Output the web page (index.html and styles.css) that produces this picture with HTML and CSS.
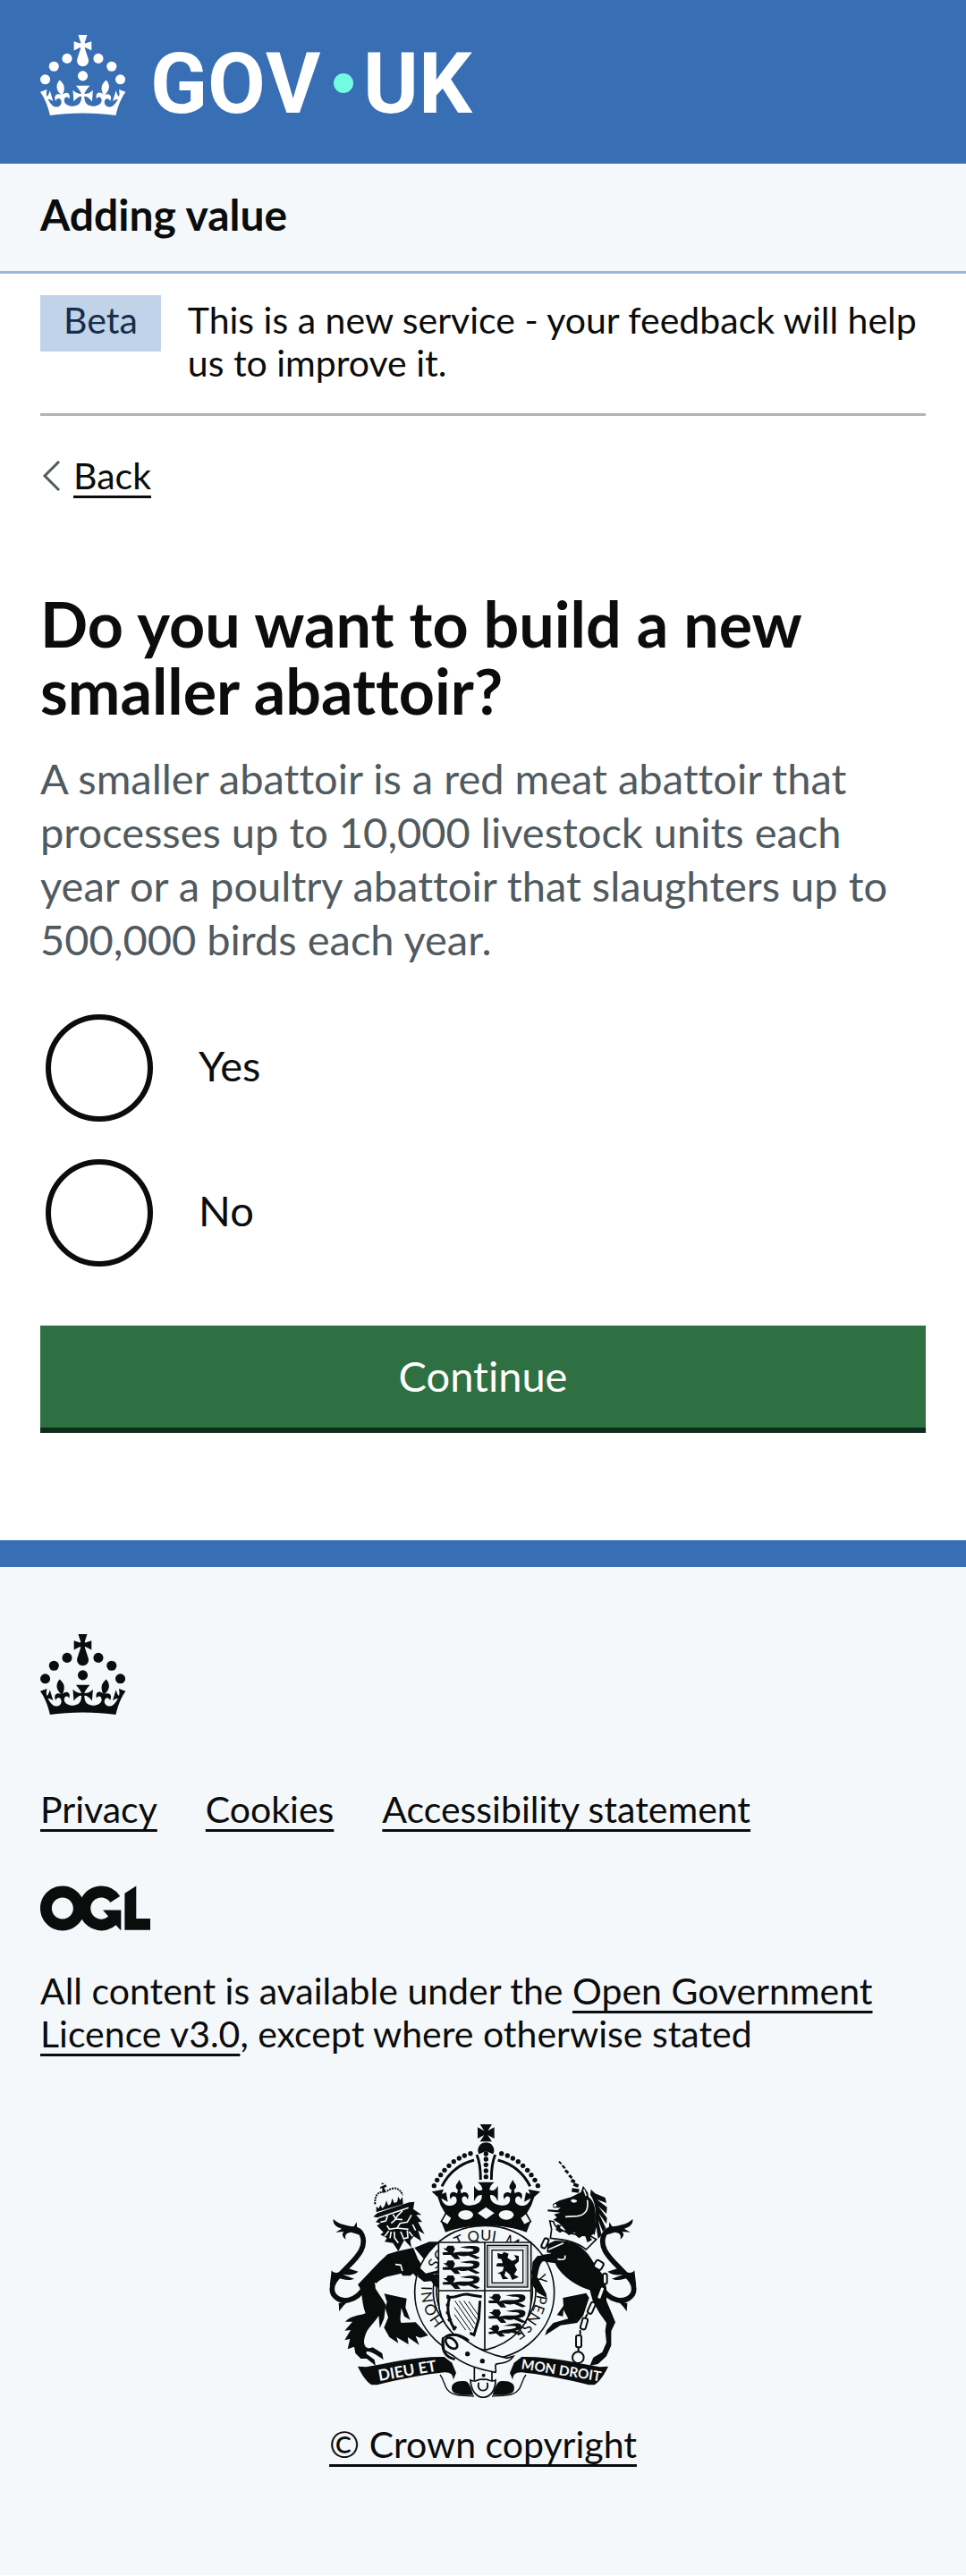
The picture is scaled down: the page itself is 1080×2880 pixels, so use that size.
FILE: index.html
```html
<!DOCTYPE html>
<html lang="en">
<head>
<meta charset="utf-8">
<meta name="viewport" content="width=device-width, initial-scale=1">
<title>Do you want to build a new smaller abattoir? - Adding value - GOV.UK</title>
<link rel="stylesheet" href="styles.css">
</head>
<body>
<svg class="defs" aria-hidden="true">
  <symbol id="crown" viewBox="0 0 64 60">
    <circle cx="20" cy="17.6" r="3.7"/><circle cx="10.2" cy="23.5" r="3.7"/><circle cx="3.7" cy="33.2" r="3.7"/>
    <circle cx="31.7" cy="30.6" r="3.7"/><circle cx="43.3" cy="17.6" r="3.7"/><circle cx="53.2" cy="23.5" r="3.7"/><circle cx="59.7" cy="33.2" r="3.7"/>
    <path d="M33.1,9.8c.2-.1.3-.3.5-.5l4.6,2.4v-6.8l-4.6,1.5c-.1-.2-.3-.3-.5-.5l1.9-5.9h-6.7l1.9,5.9c-.2.1-.3.3-.5.5l-4.6-1.5v6.8l4.6-2.4c.1.2.3.3.5.5l-2.6,8c-.9,2.8,1.2,5.7,4.1,5.7h0c3,0,5.1-2.9,4.1-5.7l-2.6-8ZM37,37.9s-3.4,3.8-4.1,6.1c2.2,0,4.2-.5,6.4-2.8l-.7,8.5c-2-2.8-4.4-4.1-5.7-3.8.1,3.1.5,6.7,5.8,7.2,3.7.3,6.7-1.5,7-3.8.4-2.6-2-4.3-3.7-1.6-1.4-4.5,2.4-6.1,4.9-3.2-1.9-4.5-1.8-7.7,2.4-10.9,3,4,2.6,7.3-1.2,11.1,2.4-1.3,6.2,0,4,4.6-1.2-2.8-3.7-2.2-4.2.2-.3,1.7.7,3.7,3,4.2,1.9.3,4.7-.9,7-5.9-1.3,0-2.4.7-3.9,1.7l2.4-8c.6,2.3,1.4,3.7,2.2,4.5.6-1.6.5-2.8,0-5.3l5,1.8c-2.6,3.6-5.2,8.7-7.3,17.5-7.4-1.1-15.7-1.7-24.5-1.7h0c-8.8,0-17.1.6-24.5,1.7-2.1-8.9-4.7-13.9-7.3-17.5l5-1.8c-.5,2.5-.6,3.7,0,5.3.8-.8,1.6-2.3,2.2-4.5l2.4,8c-1.5-1-2.6-1.7-3.9-1.7,2.3,5,5.2,6.2,7,5.9,2.3-.4,3.3-2.4,3-4.2-.5-2.4-3-3.1-4.2-.2-2.2-4.6,1.6-6,4-4.6-3.7-3.7-4.2-7.1-1.2-11.1,4.2,3.2,4.3,6.4,2.4,10.9,2.5-2.8,6.3-1.3,4.9,3.2-1.8-2.7-4.1-1-3.7,1.6.3,2.3,3.3,4.1,7,3.8,5.4-.5,5.7-4.2,5.8-7.2-1.3-.2-3.7,1-5.7,3.8l-.7-8.5c2.2,2.3,4.2,2.7,6.4,2.8-.7-2.3-4.1-6.1-4.1-6.1h10.6,0Z"/>
  </symbol>
</svg>

<header class="header">
  <a class="header-link" href="#" aria-label="GOV.UK">
    <svg class="logotype" viewBox="0 0 496 114" fill="currentColor">
      <use href="#crown" width="96" height="90"/>
      <text class="wordmark" x="123" y="87">GOV</text>
      <circle class="dot" cx="339" cy="54" r="11"/>
      <text class="wordmark" x="361" y="87">UK</text>
    </svg>
  </a>
</header>

<section class="service" aria-label="Service information">
  <a class="service-name" href="#">Adding value</a>
</section>

<div class="container">
  <div class="phase">
    <strong class="tag">Beta</strong>
    <span class="phase-text">This is a new service - your feedback will help us to improve it.</span>
  </div>
  <a class="back" href="#">
    <svg class="chevron" viewBox="0 0 30 40" aria-hidden="true"><path d="M21 4 5 20 21 36"/></svg>
    <span class="link">Back</span>
  </a>
  <main class="main">
    <form class="form">
      <fieldset class="fieldset" aria-describedby="hint">
        <legend class="legend"><h1 class="heading">Do you want to build a new smaller abattoir?</h1></legend>
        <p class="hint" id="hint">A smaller abattoir is a red meat abattoir that processes up to 10,000 livestock units each year or a poultry abattoir that slaughters up to 500,000 birds each year.</p>
        <div class="radios">
          <div class="radio"><input class="radio-input" type="radio" name="build" id="build-yes" value="yes"><label class="radio-label" for="build-yes">Yes</label></div>
          <div class="radio"><input class="radio-input" type="radio" name="build" id="build-no" value="no"><label class="radio-label" for="build-no">No</label></div>
        </div>
      </fieldset>
      <button class="button" type="submit">Continue</button>
    </form>
  </main>
</div>

<footer class="footer">
  <svg class="footer-crown" viewBox="0 0 64 60" fill="currentColor" aria-hidden="true"><use href="#crown" width="64" height="60"/></svg>
  <nav class="footer-links" aria-label="Support links">
    <a class="link" href="#">Privacy</a>
    <a class="link" href="#">Cookies</a>
    <a class="link" href="#">Accessibility statement</a>
  </nav>
  <svg class="ogl" viewBox="0 0 483.2 195.7" fill="currentColor" role="img" aria-label="Open Government Licence"><path d="M421.5 142.8V.1l-50.7 32.3v161.1h112.4v-50.7zm-122.3-9.6A47.12 47.12 0 0 1 221 97.8c0-26 21.1-47.1 47.1-47.1 16.7 0 31.4 8.7 39.7 21.8l42.7-27.2A97.63 97.63 0 0 0 268.1 0c-36.5 0-68.3 20.1-85.1 49.7A98 98 0 0 0 97.8 0C43.9 0 0 43.9 0 97.8s43.9 97.8 97.8 97.8c36.5 0 68.3-20.1 85.1-49.7a97.76 97.76 0 0 0 149.6 25.4l19.4 22.2h3v-87.8h-80l24.3 27.5zM97.8 145c-26 0-47.1-21.1-47.1-47.1s21.1-47.1 47.1-47.1 47.1 21.1 47.1 47.1S123.8 145 97.8 145"/></svg>
  <p class="licence">All content is available under the <a class="link" href="#">Open Government Licence v3.0</a>, except where otherwise stated</p>
  <a class="copyright" href="#">
    <svg class="crest" viewBox="54 48 1032 918" fill="currentColor" aria-hidden="true">
      <defs>
        <path id="garter" d="M575 770A176 166 0 0 1 575 438A176 166 0 0 1 575 770"/>
        <g id="passant"><path d="M4 12 14 12 20 3 38 3 44 14 38 28C58 20 80 26 100 22 112 18 108 12 84 12L60 8 84 5C110 2 130 4 126 18 124 28 112 32 102 31L128 44 116 48 88 36C76 40 62 38 52 34L62 48 44 48 30 34 4 34 2 26 22 24Z"/></g>
        <g id="crown-half">
          <path d="M398 274 438 266 432 282 446 276 452 308 430 296C436 316 450 324 466 320 482 316 486 302 478 292 472 286 464 290 462 300 452 282 466 268 483 280L486 268C476 262 478 250 484 246L490 234 498 248C504 258 502 264 494 268L497 280C514 268 528 284 518 300 516 288 506 286 500 294 496 312 510 322 528 320 552 318 568 306 566 286 556 282 548 290 540 306V254C548 268 556 274 568 268 568 258 562 250 552 242H581V388C530 388 480 396 444 410L430 374 444 348 428 320 418 292Z"/>
          <path class="line" d="M540 168C495 180 455 210 432 256"/>
          <path class="line" d="M549 150C560 175 562 205 562 234"/>
          <circle cx="528" cy="146" r="8"/><circle cx="508" cy="153" r="8"/><circle cx="490" cy="162" r="8"/><circle cx="472" cy="173" r="8"/><circle cx="456" cy="187" r="8"/><circle cx="441" cy="202" r="8"/><circle cx="428" cy="218" r="8"/><circle cx="416" cy="235" r="8"/><circle cx="406" cy="254" r="8"/>
          <ellipse class="light" cx="512" cy="352" rx="25" ry="16"/>
          <path class="light edge" d="M446 346 466 362 452 386 430 374Z"/>
        </g>
        <g id="tail">
          <path class="tail" d="M174 592C146 644 92 652 68 618 52 584 84 558 116 526 156 486 180 456 164 418 154 396 130 396 112 404"/>
          <path d="M68 366C90 386 112 386 136 392L146 376 148 396 172 424 128 410C108 412 106 422 110 434 94 424 98 412 104 408L76 410 96 398C74 392 66 380 68 366ZM62 538C72 552 90 548 108 528L152 542C134 556 118 554 100 552L138 566C120 574 96 568 78 560L56 590ZM88 676 86 648 120 640C106 652 98 660 88 676Z"/>
        </g>
        <g id="ribbon">
          <path d="M150 860 178 862C260 848 340 826 440 828L466 848 480 882 470 905C470 884 456 876 424 882 350 890 280 906 215 922H196C176 908 164 888 150 860Z"/>
          <path class="thin" d="M426 888C444 910 438 940 470 952 490 960 512 958 540 960"/>
          <path d="M466 938C460 916 484 906 512 910 526 914 532 940 538 956H500C480 952 468 950 466 938Z"/>
        </g>
      </defs>

      <!-- tails and supporters -->
      <use href="#tail"/>
      <use href="#tail" transform="translate(1140) scale(-1 1)"/>
      <path d="M340 462 390 442 420 442 372 500Z"/>
      <path d="M282 474 250 484 222 510 150 586C168 606 160 640 176 682 156 690 124 690 108 710L132 710 106 740 126 738 106 772 124 768 116 802 138 794 142 816 160 834 180 834 210 858 206 838 180 818C172 804 196 806 236 838L232 816 200 796C180 806 164 790 174 760 180 732 206 714 220 690L224 732 238 700 244 652 210 600C204 582 220 572 244 560L296 548 300 556 326 556 336 548 352 568 366 556 376 576 400 576 408 592 438 602 436 588 414 574 440 580 438 566 412 562 442 554 430 544 396 548 420 536 372 530 352 500 336 462Z"/>
      <path d="M238 616 314 632 310 662 326 704 306 692 296 664C294 690 290 706 296 714L344 712 386 756 360 764 344 758 356 788 318 762 320 786 280 762 286 782 256 762 238 730 252 696 242 664 248 644Z"/>
      <path class="cut" d="M276 518 294 520 300 540M208 580 216 596 238 622 244 650"/>
      <path d="M202 358 216 346 322 310 340 308 336 332 364 352 346 352 366 376 352 376 374 416 352 404 364 440 338 424 326 438 330 462 306 436 286 474 268 446 240 442 248 430 226 418 236 410 214 388 226 380 210 376 222 362Z"/>
      <path class="cut" d="M218 362 320 328M250 354 244 372 226 376M268 350 278 366 300 368M300 338 282 356 278 366 262 380M330 352 316 376 292 380 282 396M248 388 256 400 282 396 320 400M254 406 240 424M262 408 258 430M334 384 344 404M322 408 334 424M294 408 304 432 318 428 316 404M272 408 274 430 286 446"/>
      <path d="M226 258 244 250 247 258 238 260 246 276 232 278 232 262 224 264ZM230 244 240 248 230 250Z"/>
      <path class="beads" d="M208 316C206 286 220 274 232 276M248 272C272 254 294 264 300 286"/>
      <path d="M212 342 212 324 220 330 226 318 232 330 240 322 246 304 252 320 260 316 266 296 272 312 282 308 286 290 292 302 300 292 302 316 214 342Z"/>
      <g class="horn"><path d="m825 173 8 8" stroke-width="6"/><path d="m836 186 9 10" stroke-width="7"/><path d="m846 202 10 9" stroke-width="9"/><path d="m859 219 9 9" stroke-width="9"/><path d="m866 235 12 7" stroke-width="11"/><path d="m874 249 16 6" stroke-width="11"/><path d="m868 268 24 4" stroke-width="13"/></g>
      <path d="M804 316 826 304 866 292 898 276 906 254 922 278 924 292C950 310 954 360 940 416L922 430 880 412 848 404 826 380 806 368 818 360 808 350 830 344 786 340 788 334 820 336 830 328 806 328Z"/>
      <path class="light" d="M864 304C872 296 882 300 886 306 878 314 868 312 864 304Z"/><circle class="light" cx="812" cy="320" r="5"/>
      <path class="cut" d="M920 302C924 330 918 352 886 356L846 358M908 266 916 288"/>
      <path d="M930 284 932 266 946 280 980 294 984 312 952 300 986 326 984 348 956 322 986 362 984 382 958 346 982 396 972 408 956 368 968 420 956 432 950 392 944 420 936 410C954 370 952 316 930 284Z"/>
      <path class="light edge" d="M794 372 806 374 812 388C850 420 890 416 932 424L950 434 916 468C880 440 840 434 796 430L800 400Z"/>
      <path d="M818 384 832 386 828 396 842 404 828 412 814 402ZM850 388 862 392 862 404 876 412 858 420 844 408ZM886 396 896 400 896 416 908 420 892 430 878 418ZM912 420 924 420 936 436 920 444Z"/>
      <path d="M786 450 812 438 850 440C890 444 922 476 940 510L974 556 984 598 984 640 1014 712 1000 742 1000 790 984 826 956 852 928 858 940 830 970 812 984 780 980 740 984 714 960 680 938 640 928 604C880 590 826 550 812 514L770 508C758 520 756 540 752 560L782 616 784 630 752 612 732 582 736 510C744 480 780 488 800 480L784 478Z"/>
      <path d="M838 630 916 614 926 630 906 690 886 714 830 722 778 756 784 738 806 714 856 700 840 670 838 692 818 688 840 656Z"/>
      <path class="cut" d="M790 468 840 446M820 500C846 506 848 496 844 488"/>

      <!-- garter -->
      <ellipse class="light ring" cx="575" cy="612" rx="234" ry="224"/>
      <ellipse class="ring" cx="575" cy="608" rx="172" ry="162"/>
      <ellipse class="ring" cx="575" cy="608" rx="161" ry="156"/>
      <text class="motto"><textPath href="#garter" startOffset="150">HONI</textPath></text>
      <text class="motto"><textPath href="#garter" startOffset="338">SO</textPath></text>
      <text class="motto"><textPath href="#garter" startOffset="442">T QUI</textPath></text>
      <text class="motto"><textPath href="#garter" startOffset="602">M</textPath></text>
      <text class="motto"><textPath href="#garter" startOffset="756">Y</textPath></text>
      <text class="motto"><textPath href="#garter" startOffset="820">PENSE</textPath></text>
      <path d="M352 560 348 520 378 548 396 544 424 536 426 546 400 552 436 552 442 562 414 566 440 576 438 602 408 592 396 574 372 576Z"/>
      <path d="M736 510 752 490 800 484 800 508 770 508C758 520 756 540 752 560L782 616 784 630 752 612 732 582Z"/>

      <!-- shield -->
      <path class="light shield" d="M421 444H731V640C731 716 672 782 576 806 480 782 421 716 421 640Z"/>
      <path class="shield" d="M576 444V806M421 606H731"/>
      <use href="#passant" transform="translate(432 452)"/><use href="#passant" transform="translate(432 502)"/><use href="#passant" transform="translate(432 552)"/>
      <use href="#passant" transform="translate(586 614)"/><use href="#passant" transform="translate(586 666)"/><use href="#passant" transform="translate(584 722) rotate(-6) scale(.9)"/>
      <rect class="grey" x="589" y="459" width="126" height="130"/><rect class="thin" x="584" y="454" width="136" height="140"/><rect class="thin" x="600" y="470" width="104" height="110"/>
      <path d="M618 480 634 484 640 476 656 482 652 496 668 506 682 500 674 486 690 490 690 508 676 520 684 536 674 552 690 560 668 570 660 552 646 540 642 556 656 566 636 568 628 550 618 548 636 540 640 526 614 524 618 514 636 514 632 500 620 498Z"/>
      <path class="line" d="M458 628C448 660 452 700 476 738M456 628C490 630 500 610 528 620L566 626M560 640 556 700 540 754 526 748M452 620V634M446 654H458M446 680H458M452 706 464 700M470 738 480 726"/>
      <path class="strings" d="M476 640 540 734M490 640 544 718M506 640 550 704M522 642 554 688M474 662 528 740M474 686 512 738"/>

      <!-- belt -->
      <path class="light" d="M541 862H600V910H541Z"/>
      <path class="edge" d="M541 862V906M600 870V906"/>
      <path class="light belt" d="M436 764C460 750 484 752 512 772 556 806 600 822 650 832L672 826C658 848 632 850 614 852 608 862 616 872 612 880 556 870 500 850 470 824L440 806Z"/>
      <path class="belt" d="M436 764C430 800 438 828 476 836M444 760C470 746 500 756 522 774"/>
      <ellipse class="belt" cx="464" cy="782" rx="23" ry="14" transform="rotate(42 464 782)"/>
      <circle cx="518" cy="818" r="8"/><circle cx="568" cy="842" r="8"/><circle cx="572" cy="890" r="6"/>

      <!-- chain -->
      <g class="chain"><rect x="770" y="430" width="16" height="34" rx="7" transform="rotate(25 778 447)"/><rect x="944" y="506" width="28" height="28" rx="8" transform="rotate(30 958 520)"/><rect x="972" y="548" width="14" height="36" rx="7"/><rect x="957" y="592" width="16" height="44" rx="7" transform="rotate(20 965 614)"/><rect x="926" y="644" width="16" height="40" rx="7" transform="rotate(24 934 664)"/><rect x="900" y="698" width="18" height="38" rx="7" transform="rotate(16 909 717)"/><rect x="882" y="756" width="18" height="40" rx="6"/><circle cx="889" cy="830" r="19"/><path d="M896 738V754M890 798V810M920 684 914 696M950 636 944 646"/></g>

      <!-- scroll -->
      <use href="#ribbon"/><use href="#ribbon" transform="translate(1140) scale(-1 1)"/>
      <text class="scroll-text" font-size="52" transform="translate(222 909) rotate(-10)">DIEU ET</text>
      <text class="scroll-text" font-size="46" transform="translate(697 868) rotate(9)">MON DROIT</text>
      <path class="light edge" d="M528 906C548 916 550 900 570 904 592 900 594 916 612 906 612 940 596 962 570 964 546 962 530 940 528 906Z"/>
      <path class="edge" d="M556 914C544 950 596 950 584 914"/>

      <!-- royal crown -->
      <use href="#crown-half"/><use href="#crown-half" transform="translate(1160) scale(-1 1)"/>
      <path d="M560 48H600L586 70 608 58V96L586 84 600 106H560L574 84 552 96V58L574 70Z"/>
      <path d="M556 148A27 27 0 1 1 604 148L594 144H566Z"/>
      <path class="light" d="M564 150C566 136 594 136 596 150L592 236H568Z"/>
      <circle cx="580" cy="147" r="8"/><circle cx="580" cy="165" r="8"/><circle cx="580" cy="184" r="8"/><circle cx="580" cy="204" r="8"/><circle cx="580" cy="224" r="8"/>
      <path class="light" d="M552 346 580 326 608 346 580 366Z"/>
    </svg>
    <span class="link">© Crown copyright</span>
  </a>
</footer>
</body>
</html>
```
FILE: styles.css
```css
:root {
  --ink: #0b0c0c;
  --blue: #386eb4;
  --pale: #f4f8fb;
  --gutter: 45px;
}

* { box-sizing: border-box; }

body {
  margin: 0;
  background: #fff;
  color: var(--ink);
  font: 41px/48px Lato, "Liberation Sans", sans-serif;
  font-variant-ligatures: none;
}

a { color: inherit; text-decoration: none; }
svg { display: block; }
.defs { display: none; }

.link {
  text-decoration: underline;
  text-decoration-thickness: 3px;
  text-underline-offset: 7px;
  text-decoration-skip-ink: none;
}

.header {
  padding: 39px var(--gutter) 30px;
  background: var(--blue);
  color: #fff;
}
.header-link { display: block; width: fit-content; }
.logotype { width: 496px; height: 114px; }
.wordmark { font: bold 94px Roboto, sans-serif; font-kerning: none; }
.dot { fill: #73fbe1; }

.service {
  padding: 27px var(--gutter) 33px;
  background: var(--pale);
  border-bottom: 3px solid #99b7d8;
}
.service-name { display: block; font-size: 48px; line-height: 60px; font-weight: bold; }

.container { padding: 0 var(--gutter); }

.phase {
  display: flex;
  align-items: flex-start;
  gap: 30px;
  padding: 24px 0 32px;
  border-bottom: 3px solid #b2b3b5;
}
.tag {
  padding: 4px 26px 11px;
  background: #c0d3e9;
  color: #162d4b;
  font-weight: normal;
}
.phase-text { padding-top: 4px; }

.back { display: flex; width: fit-content; align-items: center; gap: 7px; margin-top: 43px; }
.chevron { width: 30px; height: 40px; fill: none; stroke: #505a5f; stroke-width: 3; }

.main { padding: 104px 0 120px; }
.fieldset { margin: 0; padding: 0; border: 0; min-width: 0; }
.legend { padding: 0; }
.heading { margin: 0; font-size: 70px; line-height: 75px; }
.hint { margin: 30px 0 54px; color: #505a5f; font-size: 47px; line-height: 60px; }

.radios { display: flex; flex-direction: column; gap: 42px; }
.radio { display: flex; align-items: center; gap: 51px; padding-left: 6px; }
.radio-input {
  appearance: none;
  width: 120px;
  height: 120px;
  margin: 0;
  border: 6px solid var(--ink);
  border-radius: 50%;
  background: #fff;
}
.radio-input:checked { box-shadow: inset 0 0 0 24px #fff; background: var(--ink); }
.radio-label { padding-bottom: 6px; font-size: 47px; line-height: 60px; }

.button {
  display: block;
  width: 100%;
  margin-top: 66px;
  padding: 26px 30px 28px;
  border: 0;
  border-bottom: 6px solid #0e2c1b;
  background: #2f7042;
  color: #fff;
  font: inherit;
  font-size: 47px;
  line-height: 60px;
}

.footer {
  padding: 75px var(--gutter) 122px;
  border-top: 30px solid var(--blue);
  background: var(--pale);
}
.footer-crown { width: 96px; height: 90px; }
.footer-links { display: flex; flex-wrap: wrap; gap: 24px 54px; margin-top: 82px; }
.ogl { width: 123px; height: 51px; margin-top: 61px; }
.licence { margin: 43px 0 0; }
.copyright { display: flex; flex-direction: column; align-items: center; gap: 28px; margin-top: 77px; }
.crest { width: 344px; height: 306px; }

.light { fill: var(--pale); }
.line { fill: none; stroke: var(--ink); stroke-width: 9; }
.thin { fill: none; stroke: var(--ink); stroke-width: 4; }
.edge { stroke: var(--ink); stroke-width: 5; }
.edge:not(.light) { fill: none; }
.ring, .shield, .belt { stroke: var(--ink); stroke-width: 5; }
.ring:not(.light), .shield:not(.light), .belt:not(.light) { fill: none; }
.belt:not(.light) { stroke-width: 8; }
.tail { fill: none; stroke: var(--ink); stroke-width: 17; }
.cut { fill: none; stroke: var(--pale); stroke-width: 5; }
.beads { fill: none; stroke: var(--ink); stroke-width: 6; stroke-dasharray: 6 3; }
.horn { stroke: var(--ink); }
.grey { fill: none; stroke: #c0c4c8; stroke-width: 9; }
.strings { fill: none; stroke: var(--ink); stroke-width: 3; }
.chain { fill: var(--pale); stroke: var(--ink); stroke-width: 6; }
.motto { font: 50px Lato, sans-serif; }
.scroll-text { fill: var(--pale); font-family: Lato, sans-serif; font-weight: bold; }
```
